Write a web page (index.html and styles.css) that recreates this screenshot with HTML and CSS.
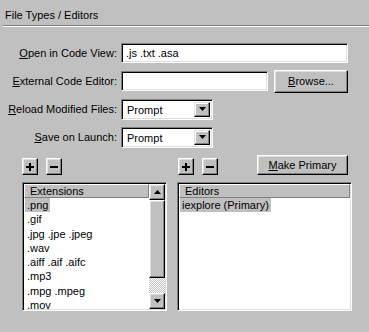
FILE: index.html
```html
<!DOCTYPE html>
<html>
<head>
<meta charset="utf-8">
<link rel="stylesheet" href="styles.css">
</head>
<body>
<div class="dlg">
  <div class="title">File Types / Editors</div>
  <div class="sep"></div>
  <div class="form">
    <div class="lbl"><u>O</u>pen in Code View:</div>
    <div class="field"><div class="edit w-full">.js .txt .asa</div></div>
    <div class="lbl"><u>E</u>xternal Code Editor:</div>
    <div class="field"><div class="edit w-mid"></div><div class="btn browse"><u>B</u>rowse...</div></div>
    <div class="lbl"><u>R</u>eload Modified Files:</div>
    <div class="field"><div class="combo"><span class="ctext">Prompt</span><span class="dd"><svg width="7" height="4" viewBox="0 0 7 4"><polygon points="0,0 7,0 3.5,4" fill="#000"/></svg></span></div></div>
    <div class="lbl"><u>S</u>ave on Launch:</div>
    <div class="field"><div class="combo"><span class="ctext">Prompt</span><span class="dd"><svg width="7" height="4" viewBox="0 0 7 4"><polygon points="0,0 7,0 3.5,4" fill="#000"/></svg></span></div></div>
  </div>
  <div class="lists">
    <div class="col left">
      <div class="tools">
        <div class="btn sq"><svg width="8" height="8" viewBox="0 0 8 8"><rect x="3" y="0" width="2" height="8" fill="#000"/><rect x="0" y="3" width="8" height="2" fill="#000"/></svg></div>
        <div class="btn sq"><svg width="8" height="8" viewBox="0 0 8 8"><rect x="0" y="3" width="8" height="2" fill="#000"/></svg></div>
      </div>
      <div class="listbox">
        <div class="lcontent">
          <div class="hdr">Extensions</div>
          <div class="item"><span class="sel">.png</span></div>
          <div class="item"><span>.gif</span></div>
          <div class="item"><span>.jpg .jpe .jpeg</span></div>
          <div class="item"><span>.wav</span></div>
          <div class="item"><span>.aiff .aif .aifc</span></div>
          <div class="item"><span>.mp3</span></div>
          <div class="item"><span>.mpg .mpeg</span></div>
          <div class="item"><span>.mov</span></div>
        </div>
        <div class="sb">
          <div class="btn arr"><svg width="7" height="4" viewBox="0 0 7 4"><polygon points="3.5,0 7,4 0,4" fill="#000"/></svg></div>
          <div class="btn thumb"></div>
          <div class="track"></div>
          <div class="btn arr"><svg width="7" height="4" viewBox="0 0 7 4"><polygon points="0,0 7,0 3.5,4" fill="#000"/></svg></div>
        </div>
      </div>
    </div>
    <div class="col right">
      <div class="tools">
        <div class="btn sq"><svg width="8" height="8" viewBox="0 0 8 8"><rect x="3" y="0" width="2" height="8" fill="#000"/><rect x="0" y="3" width="8" height="2" fill="#000"/></svg></div>
        <div class="btn sq"><svg width="8" height="8" viewBox="0 0 8 8"><rect x="0" y="3" width="8" height="2" fill="#000"/></svg></div>
        <div class="btn mk"><u>M</u>ake Primary</div>
      </div>
      <div class="listbox">
        <div class="lcontent">
          <div class="hdr">Editors</div>
          <div class="item"><span class="sel">iexplore (Primary)</span></div>
        </div>
      </div>
    </div>
  </div>
</div>
</body>
</html>
```
FILE: styles.css
```css
html, body {
  margin: 0;
  padding: 0;
}
body {
  background: #c0c0c0;
  font-family: "Liberation Sans", Arial, sans-serif;
  font-size: 11px;
  color: #000;
  width: 369px;
  height: 332px;
  overflow: hidden;
}
.title {
  padding: 9px 0 0 5px;
  height: 16px;
  line-height: 13px;
}
.sep {
  margin-left: 3px;
  border-top: 1px solid #808080;
  border-bottom: 1px solid #fff;
}
.form {
  display: grid;
  grid-template-columns: 117px auto;
  column-gap: 4px;
  row-gap: 6px;
  grid-auto-rows: 22px;
  align-items: center;
  margin-top: 15px;
}
.lbl {
  text-align: right;
  white-space: nowrap;
}
.field {
  display: flex;
  align-items: center;
  gap: 6px;
}
.edit {
  box-sizing: border-box;
  height: 20px;
  background: #fff;
  border-top: 1px solid #808080;
  border-left: 1px solid #808080;
  border-right: 1px solid #fff;
  border-bottom: 1px solid #fff;
  box-shadow: inset 1px 1px 0 #000, inset -1px -1px 0 #dfdfdf;
  padding-left: 4px;
  line-height: 18px;
}
.w-full { width: 227px; }
.w-mid { width: 147px; }
.btn {
  box-sizing: border-box;
  background: #c0c0c0;
  border-top: 1px solid #fff;
  border-left: 1px solid #fff;
  border-right: 1px solid #000;
  border-bottom: 1px solid #000;
  box-shadow: inset -1px -1px 0 #808080, inset 1px 1px 0 #dfdfdf;
  display: flex;
  align-items: center;
  justify-content: center;
}
.browse {
  width: 74px;
  height: 23px;
}
.combo {
  box-sizing: border-box;
  width: 92px;
  height: 21px;
  background: #fff;
  border-top: 1px solid #808080;
  border-left: 1px solid #808080;
  border-right: 1px solid #fff;
  border-bottom: 1px solid #fff;
  box-shadow: inset 1px 1px 0 #000, inset -1px -1px 0 #dfdfdf;
  padding: 2px;
  display: flex;
}
.ctext {
  flex: 1;
  padding-left: 3px;
  line-height: 16px;
}
.dd {
  box-sizing: border-box;
  width: 16px;
  height: 15px;
  background: #c0c0c0;
  border-top: 1px solid #dfdfdf;
  border-left: 1px solid #dfdfdf;
  border-right: 1px solid #000;
  border-bottom: 1px solid #000;
  box-shadow: inset -1px -1px 0 #808080, inset 1px 1px 0 #fff;
  display: flex;
  align-items: center;
  justify-content: center;
}
.lists {
  display: flex;
  gap: 10px;
  padding-left: 22px;
  margin-top: 6px;
}
.col.left { width: 145px; }
.col.right { width: 175px; }
.tools {
  height: 21px;
  display: flex;
  align-items: flex-end;
  gap: 8px;
  margin-bottom: 7px;
}
.right .tools { padding-left: 1px; }
.sq {
  width: 16px;
  height: 17px;
}
.mk {
  margin-left: auto;
  margin-right: 4px;
  width: 91px;
  height: 20px;
}
.listbox {
  box-sizing: border-box;
  height: 129px;
  background: #fff;
  border-top: 1px solid #808080;
  border-left: 1px solid #808080;
  border-right: 1px solid #fff;
  border-bottom: 1px solid #fff;
  padding: 1px;
  box-shadow: inset 1px 1px 0 #000, inset -1px -1px 0 #dfdfdf;
  display: flex;
}
.lcontent {
  flex: 1;
  overflow: hidden;
}
.hdr {
  box-sizing: border-box;
  height: 14px;
  background: #c0c0c0;
  border-top: 1px solid #fff;
  border-left: 1px solid #fff;
  border-bottom: 1px solid #808080;
  border-right: 1px solid #808080;
  padding-left: 5px;
  line-height: 12px;
}
.item {
  height: 14.3px;
  line-height: 15px;
  padding-left: 1px;
  white-space: nowrap;
}
.item span {
  padding: 0 2px;
}
.item .sel {
  background: #c0c0c0;
  display: inline-block;
  height: 14px;
}
.sb {
  width: 16px;
  display: flex;
  flex-direction: column;
}
.arr {
  height: 16px;
  flex: none;
}
.thumb {
  height: 78px;
  flex: none;
}
.track {
  flex: 1;
  background-image: repeating-conic-gradient(#fff 0 25%, #c0c0c0 0 50%);
  background-size: 2px 2px;
}
```
